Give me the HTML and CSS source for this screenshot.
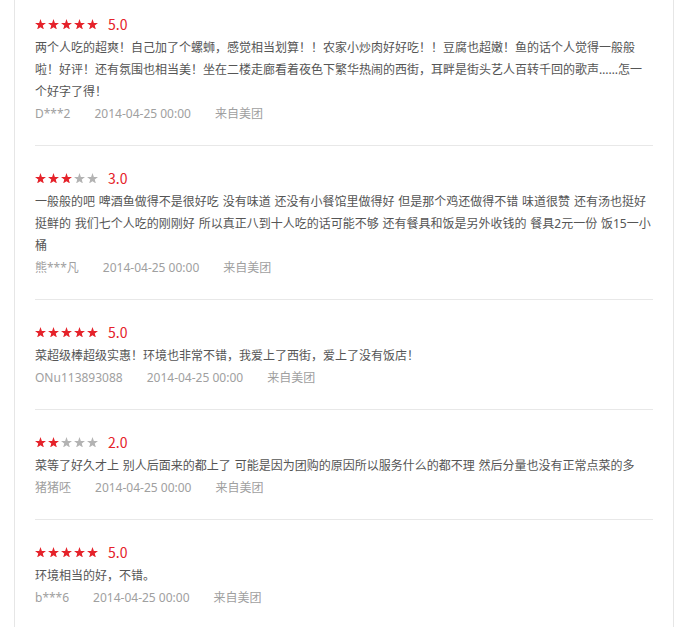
FILE: index.html
```html
<!DOCTYPE html>
<html lang="zh-CN">
<head>
    <meta charset="UTF-8">
    <meta name="viewport" content="width=device-width, initial-scale=1.0">
    <title>用户评价</title>
    <link rel="stylesheet" href="styles.css">
</head>
<body>
    <svg width="0" height="0" class="defs">
        <defs>
            <symbol id="star" viewBox="0 0 24 23">
                <polygon points="12,0 15,8.6 24,8.8 16.9,14.2 19.4,23 12,17.8 4.6,23 7.1,14.2 0,8.8 9,8.6"/>
            </symbol>
        </defs>
    </svg>

    <div class="comentarios">
        <!-- comentario 1 -->
        <div class="item">
            <div class="calificacion">
                <span class="estrellas">
                    <svg class="on"><use href="#star"/></svg><svg class="on"><use href="#star"/></svg><svg class="on"><use href="#star"/></svg><svg class="on"><use href="#star"/></svg><svg class="on"><use href="#star"/></svg>
                </span>
                <span class="puntaje">5.0</span>
            </div>
            <p class="texto">两个人吃的超爽！自己加了个螺蛳，感觉相当划算！！农家小炒肉好好吃！！豆腐也超嫩！鱼的话个人觉得一般般啦！好评！还有氛围也相当美！坐在二楼走廊看着夜色下繁华热闹的西街，耳畔是街头艺人百转千回的歌声……怎一个好字了得！</p>
            <div class="meta">
                <span>D***2</span>
                <span>2014-04-25 00:00</span>
                <span>来自美团</span>
            </div>
        </div>

        <!-- comentario 2 -->
        <div class="item">
            <div class="calificacion">
                <span class="estrellas">
                    <svg class="on"><use href="#star"/></svg><svg class="on"><use href="#star"/></svg><svg class="on"><use href="#star"/></svg><svg class="off"><use href="#star"/></svg><svg class="off"><use href="#star"/></svg>
                </span>
                <span class="puntaje">3.0</span>
            </div>
            <p class="texto">一般般的吧 啤酒鱼做得不是很好吃 没有味道 还没有小餐馆里做得好 但是那个鸡还做得不错 味道很赞 还有汤也挺好挺鲜的 我们七个人吃的刚刚好 所以真正八到十人吃的话可能不够 还有餐具和饭是另外收钱的 餐具2元一份 饭15一小桶</p>
            <div class="meta">
                <span>熊***凡</span>
                <span>2014-04-25 00:00</span>
                <span>来自美团</span>
            </div>
        </div>

        <!-- comentario 3 -->
        <div class="item">
            <div class="calificacion">
                <span class="estrellas">
                    <svg class="on"><use href="#star"/></svg><svg class="on"><use href="#star"/></svg><svg class="on"><use href="#star"/></svg><svg class="on"><use href="#star"/></svg><svg class="on"><use href="#star"/></svg>
                </span>
                <span class="puntaje">5.0</span>
            </div>
            <p class="texto">菜超级棒超级实惠！环境也非常不错，我爱上了西街，爱上了没有饭店！</p>
            <div class="meta">
                <span>ONu113893088</span>
                <span>2014-04-25 00:00</span>
                <span>来自美团</span>
            </div>
        </div>

        <!-- comentario 4 -->
        <div class="item">
            <div class="calificacion">
                <span class="estrellas">
                    <svg class="on"><use href="#star"/></svg><svg class="on"><use href="#star"/></svg><svg class="off"><use href="#star"/></svg><svg class="off"><use href="#star"/></svg><svg class="off"><use href="#star"/></svg>
                </span>
                <span class="puntaje">2.0</span>
            </div>
            <p class="texto">菜等了好久才上 别人后面来的都上了 可能是因为团购的原因所以服务什么的都不理 然后分量也没有正常点菜的多</p>
            <div class="meta">
                <span>猪猪呸</span>
                <span>2014-04-25 00:00</span>
                <span>来自美团</span>
            </div>
        </div>

        <!-- comentario 5 -->
        <div class="item">
            <div class="calificacion">
                <span class="estrellas">
                    <svg class="on"><use href="#star"/></svg><svg class="on"><use href="#star"/></svg><svg class="on"><use href="#star"/></svg><svg class="on"><use href="#star"/></svg><svg class="on"><use href="#star"/></svg>
                </span>
                <span class="puntaje">5.0</span>
            </div>
            <p class="texto">环境相当的好，不错。</p>
            <div class="meta">
                <span>b***6</span>
                <span>2014-04-25 00:00</span>
                <span>来自美团</span>
            </div>
        </div>
    </div>
</body>
</html>
```

FILE: styles.css
```css
body {
    margin: 0;
    background-color: #fff;
    font-family: 'Noto Sans', 'Noto Sans CJK SC', sans-serif;
    font-size: 12px;
    color: #555;
}

.defs {
    position: absolute;
    width: 0;
    height: 0;
}

.comentarios {
    margin: 0 14px;
    padding: 0 20px;
    border-left: 1px solid #e6e6e6;
    border-right: 1px solid #e6e6e6;
}

.item {
    padding: 20px 0 20px;
    border-bottom: 1px solid #e8e8e8;
}

.item:first-child {
    padding-top: 12px;
}

.calificacion {
    display: flex;
    align-items: center;
    height: 24px;
    margin-bottom: 1px;
}

.estrellas {
    display: flex;
    gap: 2px;
}

.estrellas svg {
    width: 11px;
    height: 10.5px;
}

.estrellas .on {
    fill: #e5222a;
}

.estrellas .off {
    fill: #b3b3b3;
}

.puntaje {
    margin-left: 10px;
    font-family: 'Noto Sans CJK SC', sans-serif;
    font-size: 14px;
    color: #e5222a;
}

.texto {
    margin: 0;
    line-height: 22px;
    word-spacing: 0.7px;
}

.meta {
    display: flex;
    gap: 24px;
    line-height: 22px;
    color: #a0a0a0;
}
```
